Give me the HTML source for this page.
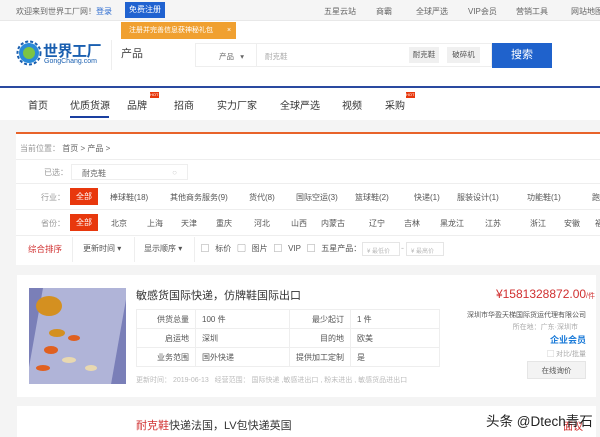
<!DOCTYPE html><html><head><meta charset="utf-8"><style>
*{margin:0;padding:0;box-sizing:border-box}
body{width:600px;height:437px;overflow:hidden;background:#f4f4f4;font-family:"Liberation Sans","Noto Sans CJK SC",sans-serif;color:#333;position:relative;font-size:9px}
.a{position:absolute;white-space:nowrap}
.top{position:absolute;left:0;top:0;width:600px;height:21px;background:#f5f5f5;border-bottom:1px solid #e8e8e8}
.hdr{position:absolute;left:0;top:21px;width:600px;height:66px;background:#fff}
.nav{position:absolute;left:0;top:86px;width:600px;height:34px;background:#fff;border-top:2px solid #2a4aa0}
.panel{position:absolute;left:16px;top:132px;width:584px;height:133px;background:#fff;border-top:2px solid #e8632a}
.row{position:absolute;left:16px;width:584px;border-bottom:1px solid #eee}
.red{background:#e8380d;color:#fff;padding:3px 6px}
.g{color:#999}
.t{position:absolute;white-space:nowrap;font-size:8px;color:#555}
.n{position:absolute;white-space:nowrap;font-size:10px;color:#333;top:97px}
.tl{position:absolute;white-space:nowrap;font-size:8px;color:#666;top:6px}
td{border:1px solid #eee;height:19px;font-size:8px;color:#555;padding:0 6px}
</style></head><body>
<div class="top"></div>
<div class="tl" style="left:16px">欢迎来到世界工厂网！</div>
<div class="tl" style="left:96px;color:#2a6ad0">登录</div>
<div class="a" style="left:125px;top:2px;width:40px;height:16px;background:#2062d0;color:#fff;font-size:8px;text-align:center;line-height:16px">免费注册</div>
<div class="tl" style="left:324px">五星云站</div>
<div class="tl" style="left:376px">商霸</div>
<div class="tl" style="left:416px">全球严选</div>
<div class="tl" style="left:468px">VIP会员</div>
<div class="tl" style="left:516px">营销工具</div>
<div class="tl" style="left:571px">网站地图</div>
<div class="hdr"></div>
<div class="a" style="left:121px;top:22px;width:115px;height:17px;background:#f0a030;color:#fff;font-size:7px;line-height:17px;padding-left:8px">注册并完善信息获神秘礼包 <span style="margin-left:12px">×</span></div>
<svg class="a" style="left:16px;top:40px" width="26" height="26" viewBox="0 0 26 26"><circle cx="13" cy="13" r="10" fill="#2a8ad8"/><circle cx="13" cy="13" r="6" fill="#7cc444"/><circle cx="13" cy="13" r="11.5" fill="none" stroke="#1a5fb0" stroke-width="2" stroke-dasharray="3 2"/></svg>
<div class="a" style="left:43px;top:40px;font-size:15px;font-weight:bold;color:#1a5fb0;letter-spacing:-0.5px">世界工厂</div>
<div class="a" style="left:44px;top:58px;font-size:7px;color:#1a5fb0">GongChang.com</div>
<div class="a" style="left:111px;top:40px;width:1px;height:30px;background:#eee"></div>
<div class="a" style="left:121px;top:45px;font-size:11px;color:#444">产品</div>
<div class="a" style="left:195px;top:43px;width:297px;height:24px;border:1px solid #eee;background:#fff"></div>
<div class="a" style="left:219px;top:51px;font-size:7.5px;color:#666">产品 &nbsp;&nbsp;▾</div>
<div class="a" style="left:256px;top:44px;width:1px;height:22px;background:#eee"></div>
<div class="a" style="left:265px;top:51px;font-size:7.5px;color:#aaa">耐克鞋</div>
<div class="a" style="left:409px;top:47px;width:30px;height:16px;background:#f0f0f0;font-size:7.5px;color:#555;text-align:center;line-height:16px">耐克鞋</div>
<div class="a" style="left:447px;top:47px;width:33px;height:16px;background:#f0f0f0;font-size:7.5px;color:#555;text-align:center;line-height:16px">破碎机</div>
<div class="a" style="left:492px;top:43px;width:60px;height:25px;background:#1f62cc;color:#fff;font-size:11px;text-align:center;line-height:25px">搜索</div>
<div class="nav"></div>
<div class="n" style="left:28px">首页</div>
<div class="n" style="left:70px">优质货源</div>
<div class="a" style="left:70px;top:116px;width:39px;height:2px;background:#1a3fa0"></div>
<div class="n" style="left:127px">品牌</div>
<div class="a" style="left:150px;top:92px;width:9px;height:6px;background:#e8380d;font-size:4px;color:#fff">HOT</div>
<div class="n" style="left:174px">招商</div>
<div class="n" style="left:217px">实力厂家</div>
<div class="n" style="left:280px">全球严选</div>
<div class="n" style="left:342px">视频</div>
<div class="n" style="left:385px">采购</div>
<div class="a" style="left:406px;top:92px;width:9px;height:6px;background:#e8380d;font-size:4px;color:#fff">HOT</div>
<div class="panel"></div>
<div class="row" style="top:134px;height:26px"></div>
<div class="a g" style="left:20px;top:143px;font-size:8px">当前位置： <span style="color:#666">首页 &gt; 产品 &gt;</span></div>
<div class="row" style="top:160px;height:24px"></div>
<div class="a g" style="left:44px;top:167px;font-size:8px">已选：</div>
<div class="a" style="left:71px;top:164px;width:117px;height:16px;border:1px solid #eee;font-size:8px;color:#666;padding:3px 10px">耐克鞋 <span style="position:absolute;right:10px;color:#ccc">○</span></div>
<div class="row" style="top:184px;height:26px"></div>
<div class="a g" style="left:41px;top:192px;font-size:8px">行业：</div>
<div class="a red" style="left:70px;top:188px;font-size:8px">全部</div>
<div class="t" style="left:110px;top:192px">棒球鞋(18)</div>
<div class="t" style="left:170px;top:192px">其他商务服务(9)</div>
<div class="t" style="left:249px;top:192px">货代(8)</div>
<div class="t" style="left:296px;top:192px">国际空运(3)</div>
<div class="t" style="left:355px;top:192px">篮球鞋(2)</div>
<div class="t" style="left:414px;top:192px">快递(1)</div>
<div class="t" style="left:457px;top:192px">服装设计(1)</div>
<div class="t" style="left:527px;top:192px">功能鞋(1)</div>
<div class="t" style="left:592px;top:192px">跑步鞋</div>
<div class="row" style="top:210px;height:26px"></div>
<div class="a g" style="left:41px;top:218px;font-size:8px">省份：</div>
<div class="a red" style="left:70px;top:214px;font-size:8px">全部</div>
<div class="t" style="left:111px;top:218px">北京</div><div class="t" style="left:147px;top:218px">上海</div><div class="t" style="left:181px;top:218px">天津</div><div class="t" style="left:216px;top:218px">重庆</div><div class="t" style="left:254px;top:218px">河北</div><div class="t" style="left:291px;top:218px">山西</div><div class="t" style="left:321px;top:218px">内蒙古</div><div class="t" style="left:369px;top:218px">辽宁</div><div class="t" style="left:404px;top:218px">吉林</div><div class="t" style="left:440px;top:218px">黑龙江</div><div class="t" style="left:485px;top:218px">江苏</div><div class="t" style="left:530px;top:218px">浙江</div><div class="t" style="left:564px;top:218px">安徽</div><div class="t" style="left:595px;top:218px">福</div>
<div class="a" style="left:28px;top:243px;font-size:8.5px;color:#d03030">综合排序</div>
<div class="a" style="left:72px;top:237px;width:1px;height:25px;background:#eee"></div>
<div class="t" style="left:83px;top:243px">更新时间 ▾</div>
<div class="a" style="left:134px;top:237px;width:1px;height:25px;background:#eee"></div>
<div class="t" style="left:144px;top:243px">显示顺序 ▾</div>
<div class="a" style="left:194px;top:237px;width:1px;height:25px;background:#eee"></div>
<div class="t" style="left:201px;top:243px;word-spacing:4px">▢ 标价 ▢ 图片 ▢ VIP ▢ 五星产品：</div>
<div class="a" style="left:362px;top:242px;width:38px;height:14px;border:1px solid #e5e5e5;font-size:6px;color:#bbb;padding:3px 4px">¥ 最低价</div>
<div class="a" style="left:401px;top:243px;color:#bbb">-</div>
<div class="a" style="left:406px;top:242px;width:38px;height:14px;border:1px solid #e5e5e5;font-size:6px;color:#bbb;padding:3px 4px">¥ 最高价</div>
<div class="a" style="left:17px;top:275px;width:579px;height:122px;background:#fff"></div>
<svg class="a" style="left:29px;top:288px" width="97" height="96"><rect width="97" height="96" fill="#7a7fb8"/><rect x="14" y="0" width="85" height="96" fill="#c8cbe6" opacity=".7" transform="skewX(-10)"/><g fill="#d49020"><ellipse cx="20" cy="18" rx="13" ry="10"/><ellipse cx="28" cy="45" rx="8" ry="4"/><ellipse cx="45" cy="50" rx="6" ry="3" fill="#e06020"/><ellipse cx="22" cy="62" rx="7" ry="4" fill="#e06020"/><ellipse cx="40" cy="72" rx="7" ry="3" fill="#e8d8b0"/><ellipse cx="14" cy="80" rx="7" ry="3" fill="#e06020"/><ellipse cx="62" cy="80" rx="6" ry="3" fill="#e8d8b0"/></g></svg>
<div class="a" style="left:136px;top:287px;font-size:11px;color:#333">敏感货国际快递，仿牌鞋国际出口</div>
<table class="a" style="left:136px;top:309px;width:304px;border-collapse:collapse"><tr><td style="text-align:right;width:59px">供货总量</td><td style="width:94px">100 件</td><td style="text-align:right;width:60px">最少起订</td><td>1 件</td></tr><tr><td style="text-align:right">启运地</td><td>深圳</td><td style="text-align:right">目的地</td><td>欧美</td></tr><tr><td style="text-align:right">业务范围</td><td>国外快递</td><td style="text-align:right">提供加工定制</td><td>是</td></tr></table>
<div class="a" style="left:136px;top:375px;font-size:7px;color:#bbb">更新时间： 2019-06-13 &nbsp; 经营范围： 国际快递 ,敏感进出口 , 粉末进出 , 敏感货品进出口</div>
<div class="a" style="right:5px;top:287px;font-size:12px;color:#d03030">¥1581328872.00<span style="font-size:7px">/件</span></div>
<div class="a" style="right:14px;top:310px;font-size:7px;color:#555">深圳市华盈天梯国际货运代理有限公司</div>
<div class="a" style="right:22px;top:322px;font-size:7px;color:#aaa">所在地：广东·深圳市</div>
<div class="a" style="right:14px;top:333px;font-size:9px;color:#1a7ad8;font-weight:bold">企业会员</div>
<div class="a" style="right:14px;top:349px;font-size:7px;color:#aaa">▢ 对比/批量</div>
<div class="a" style="left:527px;top:361px;width:59px;height:18px;background:#f3f3f3;border:1px solid #e5e5e5;font-size:7.5px;color:#555;text-align:center;line-height:17px">在线询价</div>
<div class="a" style="left:17px;top:406px;width:579px;height:31px;background:#fff"></div>
<div class="a" style="left:136px;top:417px;font-size:11px;color:#333"><span style="color:#d03030">耐克鞋</span>快递法国，LV包快递英国</div>
<div class="a" style="left:563px;top:418px;font-size:10px;color:#d03030">面议</div>
<div class="a" style="left:486px;top:410px;font-size:13.5px;color:#222">头条 @Dtech青石</div>
</body></html>
